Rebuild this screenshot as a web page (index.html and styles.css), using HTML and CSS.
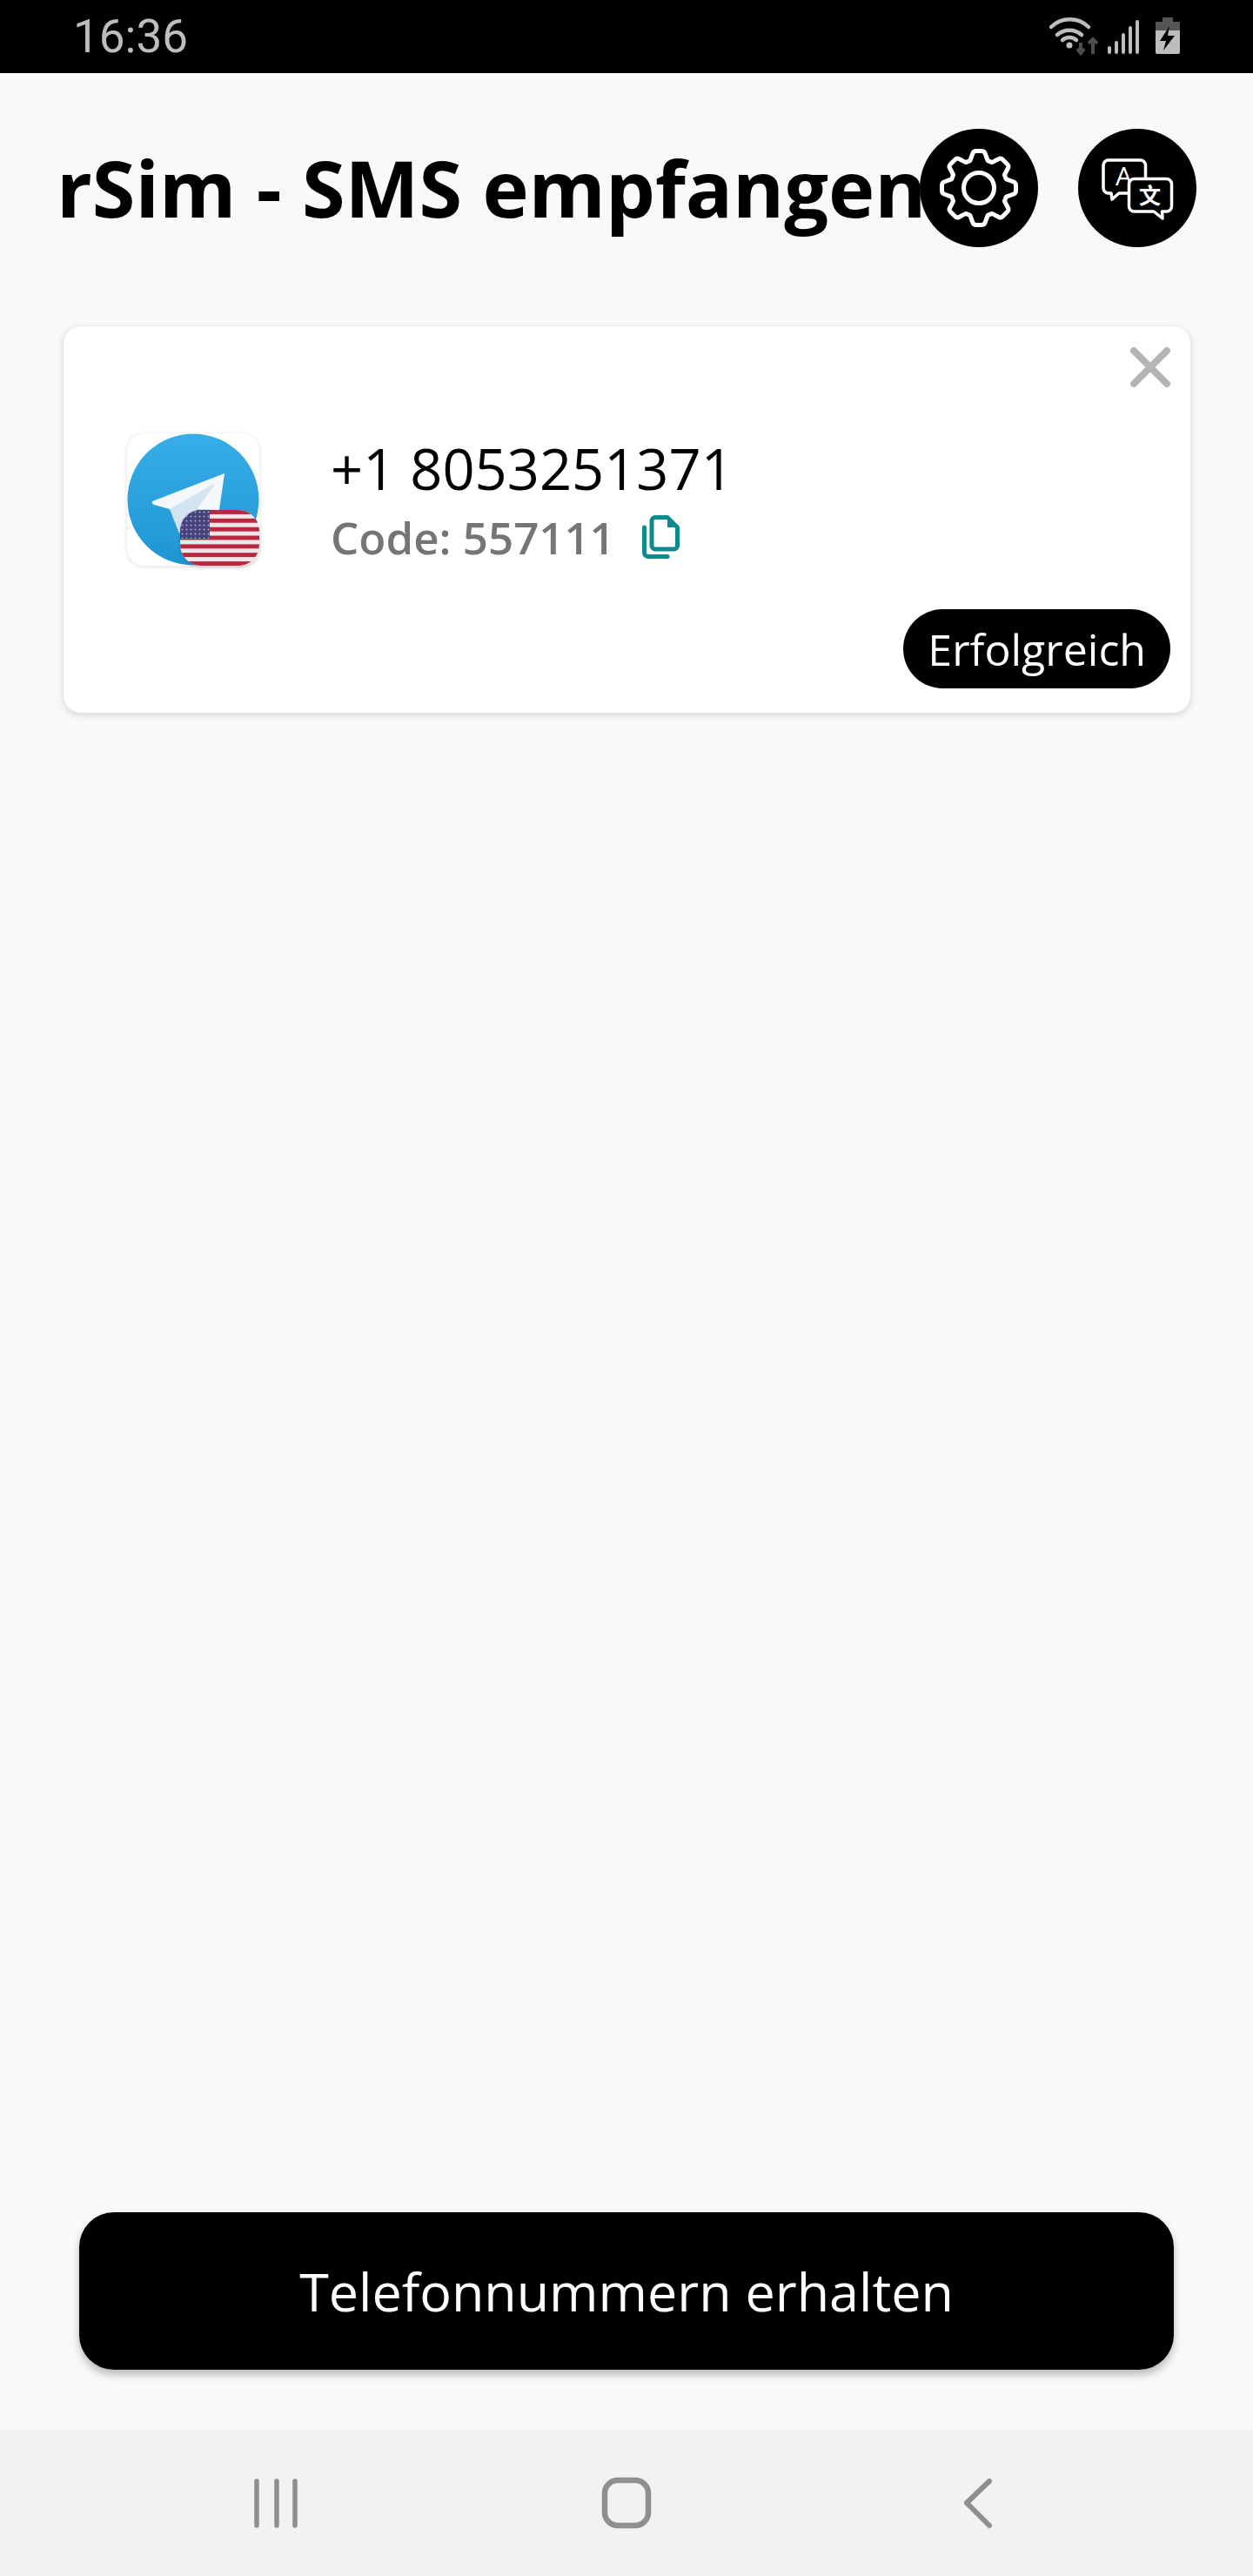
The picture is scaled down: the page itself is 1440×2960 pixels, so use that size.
FILE: index.html
```html
<!DOCTYPE html>
<html>

<head>
    <title>rSim - SMS empfangen</title>
    <link rel="stylesheet" href="styles.css">
</head>

<body>
    <!-- Status bar -->
    <div class="status-bar">
        <span class="status-time">16:36</span>
        <svg class="status-icons" width="200" height="85" viewBox="0 0 200 85">
            <g fill="none" stroke="#bdbdbd" stroke-width="4.5" stroke-linecap="round">
                <path d="M28 31 A31 31 0 0 1 71 31" />
                <path d="M35 40 A21 21 0 0 1 63 40" />
                <path d="M41 46 A12 12 0 0 1 57 46" />
            </g>
            <circle cx="49" cy="52" r="3.5" fill="#bdbdbd" />
            <path d="M62 49V60M58 56l4 5 4-5M76 62V46M71 50l5-5 5 5" fill="none" stroke="#4d4d4d" stroke-width="4" />
            <g fill="none" stroke="#bdbdbd" stroke-width="4" stroke-linecap="round">
                <path d="M95 55V60M103 49V60M111 40V60M119 32V60M127 25V60" />
            </g>
            <path d="M156 20H168V25H176V35H148V25H156Z" fill="#555" />
            <path d="M148 35H176V60a2 2 0 0 1-2 2H150a2 2 0 0 1-2-2Z" fill="#bdbdbd" />
            <path d="M164 30L153 47H160L157 58L170 41H162Z" fill="#000" />
        </svg>
    </div>

    <div class="main">
        <div class="header">
            <h1 class="title">rSim - SMS empfangen</h1>
            <div class="header-buttons">
                <button class="round-btn">
                    <svg width="100" height="100" viewBox="-50 -50 100 100" fill="none" stroke="#fff" stroke-width="5" stroke-linejoin="round">
                        <path d="M-10.2 -31.4L-7 -40Q-6 -42.500 -3 -42.500H3Q6 -42.500 7 -40L10.200 -31.400Q12.500 -30.500 15 -29.400L23 -33.500Q25.300 -34.800 27.500 -32.500L32.500 -27.500Q34.800 -25.300 33.500 -23L29.400 -15Q30.500 -12.500 31.400 -10.200L40 -7Q42.500 -6 42.500 -3V3Q42.500 6 40 7L31.400 10.200Q30.500 12.500 29.400 15L33.500 23Q34.800 25.300 32.500 27.500L27.500 32.500Q25.300 34.800 23 33.500L15 29.400Q12.500 30.500 10.200 31.400L7 40Q6 42.500 3 42.500H-3Q-6 42.500 -7 40L-10.200 31.400Q-12.500 30.500 -15 29.400L-23 33.500Q-25.300 34.800 -27.500 32.500L-32.500 27.500Q-34.800 25.300 -33.500 23L-29.400 15Q-30.500 12.500 -31.400 10.200L-40 7Q-42.500 6 -42.500 3V-3Q-42.500 -6 -40 -7L-31.400 -10.200Q-30.500 -12.500 -29.400 -15L-33.500 -23Q-34.800 -25.300 -32.500 -27.500L-27.500 -32.500Q-25.300 -34.800 -23 -33.500L-15 -29.400Q-12.500 -30.500 -10.200 -31.400Z" />
                        <circle r="17.5" />
                    </svg>
                </button>
                <button class="round-btn">
                    <svg width="100" height="100" viewBox="-50 -50 100 100" fill="none" stroke="#fff" stroke-width="3.5" stroke-linejoin="round" stroke-linecap="round">
                        <path d="M9.5 -12V-26a6 6 0 0 0-6-6H-33a6 6 0 0 0-6 6V0a6 6 0 0 0 6 6H-30L-29 13L-21 6H-10" />
                        <text class="icon-letter" x="-15.5" y="-3" text-anchor="middle">A</text>
                        <path d="M-3.5 -10.5H33.5a6 6 0 0 1 6 6V21a6 6 0 0 1-6 6H28.5L29 35L19 27H-3.5a6 6 0 0 1-6-6V-4.5a6 6 0 0 1 6-6Z" fill="#000" />
                        <text class="icon-han" x="14.5" y="18" text-anchor="middle">文</text>
                    </svg>
                </button>
            </div>
        </div>

        <div class="card">
            <svg class="card-close" width="46" height="46" viewBox="0 0 46 46">
                <path d="M4 4L42 42M42 4L4 42" stroke="#b5b5b5" stroke-width="8" stroke-linecap="round" />
            </svg>

            <div class="card-row">
                <div class="app-icon">
                    <svg width="152" height="152" viewBox="0 0 152 152">
                        <defs>
                            <linearGradient id="tgBlue" x1="0" y1="0" x2="0" y2="1">
                                <stop offset="0" stop-color="#37aeE8" />
                                <stop offset="1" stop-color="#1f96d2" />
                            </linearGradient>
                        </defs>
                        <circle cx="76" cy="76" r="75.5" fill="url(#tgBlue)" />
                        <path d="M112 46L29 78Q28 81 31 82L49 87L106 88Z" fill="#f4f8fb" />
                        <path d="M49 87L60 115L100 60Q102 58 98 59Z" fill="#d3e4f0" />
                    </svg>
                    <svg class="flag" width="91" height="64" viewBox="0 0 91 64">
                        <defs>
                            <pattern id="stars" width="5" height="5" patternUnits="userSpaceOnUse">
                                <circle cx="2.5" cy="2.5" r="1" fill="#a9a9c8" />
                            </pattern>
                        </defs>
                        <rect width="91" height="64" fill="#f3e6e8" />
                        <g fill="#b8293f">
                            <rect y="0" width="91" height="4.9" />
                            <rect y="9.8" width="91" height="4.9" />
                            <rect y="19.7" width="91" height="4.9" />
                            <rect y="29.5" width="91" height="4.9" />
                            <rect y="39.4" width="91" height="4.9" />
                            <rect y="49.2" width="91" height="4.9" />
                            <rect y="59.1" width="91" height="4.9" />
                        </g>
                        <rect width="34" height="33" fill="#45437c" />
                        <rect width="34" height="33" fill="url(#stars)" />
                    </svg>
                </div>
                <div class="card-text">
                    <div class="phone">+1 8053251371</div>
                    <div class="code-row">
                        <span class="code">Code: 557111</span>
                        <svg class="copy-icon" width="43" height="50" viewBox="0 0 43 50" fill="none" stroke="#0f8a8c" stroke-width="5" stroke-linejoin="round" stroke-linecap="round">
                            <path d="M2.5 14V43a4.500 4.500 0 0 0 4.500 4.500H29" />
                            <path d="M15 2.500H29L40.500 14V35a4 4 0 0 1-4 4H15a4 4 0 0 1-4-4V6.500a4 4 0 0 1 4-4Z" />
                            <path d="M29 4V14H39" fill="#0f8a8c" stroke-width="0" />
                        </svg>
                    </div>
                </div>
            </div>

            <div class="card-status">
                <span class="pill">Erfolgreich</span>
            </div>
        </div>

        <div class="bottom-action">
            <button class="primary-btn">Telefonnummern erhalten</button>
        </div>
    </div>

    <!-- Android navigation -->
    <div class="nav-bar">
        <div class="nav-cell">
            <svg width="60" height="60" viewBox="0 0 60 60" fill="none" stroke="#8f8f8f" stroke-width="5.5" stroke-linecap="round">
                <path d="M7 5V56M30 5V56M51 5V56" />
            </svg>
        </div>
        <div class="nav-cell">
            <svg width="60" height="60" viewBox="0 0 60 60" fill="none" stroke="#8f8f8f" stroke-width="6.5">
                <rect x="5" y="4" width="50" height="52" rx="15" />
            </svg>
        </div>
        <div class="nav-cell">
            <svg width="60" height="60" viewBox="0 0 60 60" fill="none" stroke="#8f8f8f" stroke-width="6" stroke-linecap="round" stroke-linejoin="round">
                <path d="M45 5L19 30L45 56" />
            </svg>
        </div>
    </div>
</body>

</html>
```

FILE: styles.css
```css
/* rSim - SMS screen */
* {
    box-sizing: border-box;
}

body {
    margin: 0;
    height: 2960px;
    display: flex;
    flex-direction: column;
    font-family: "Open Sans", sans-serif;
    background-color: #f8f9fb;
    overflow: hidden;
}

button {
    border: none;
    padding: 0;
    font-family: inherit;
}

/* Status bar */
.status-bar {
    height: 84px;
    flex-shrink: 0;
    background-color: #000;
    display: flex;
    align-items: center;
    justify-content: space-between;
    padding: 0 60px 0 84px;
}

.status-time {
    font-family: Roboto, sans-serif;
    font-size: 53px;
    color: #bdbdbd;
    line-height: 84px;
}

.status-icons {
    display: block;
}

/* Main area */
.main {
    flex: 1;
    display: flex;
    flex-direction: column;
}

.header {
    display: flex;
    align-items: flex-start;
    padding: 64px 65px 0 65px;
    height: 291px;
}

/* the title runs right up under the first round button */
.title {
    flex: 1;
    min-width: 0;
    margin: 0;
    font-size: 90px;
    font-weight: 700;
    line-height: 134px;
    color: #000;
    white-space: nowrap;
}

.header-buttons {
    display: flex;
    flex-shrink: 0;
    gap: 46px;
}

.round-btn {
    width: 136px;
    height: 136px;
    border-radius: 50%;
    background-color: #000;
    display: flex;
    align-items: center;
    justify-content: center;
}

/* Card */
.card {
    position: relative;
    margin: 0 72px 0 73px;
    height: 444px;
    padding: 123px 23px 28px 73px;
    background-color: #fff;
    border-radius: 20px;
    box-shadow: 0 2px 8px rgba(0, 0, 0, 0.16);
}

.card-close {
    position: absolute;
    top: 24px;
    right: 23px;
}

.card-row {
    display: flex;
    gap: 82px;
}

.app-icon {
    position: relative;
    width: 152px;
    height: 152px;
    background-color: #fff;
    border-radius: 20px;
    box-shadow: 0 1px 5px rgba(0, 0, 0, 0.14);
}

.app-icon svg {
    display: block;
}

.flag {
    position: absolute;
    right: 0;
    bottom: 0;
    border-radius: 24px;
    box-shadow: 0 2px 4px rgba(0, 0, 0, 0.15);
    filter: blur(0.6px);
}

.phone {
    font-size: 65px;
    line-height: 80px;
    color: #000;
}

.code-row {
    display: flex;
    align-items: center;
    gap: 31px;
    height: 78px;
}

.code {
    font-size: 51px;
    font-weight: 600;
    color: #757575;
}

.copy-icon {
    display: block;
}

.icon-letter {
    font-family: "Open Sans", sans-serif;
    font-size: 30px;
    fill: #fff;
    stroke: none;
}

.icon-han {
    font-family: "Noto Sans CJK SC", sans-serif;
    font-size: 25px;
    font-weight: 700;
    fill: #fff;
    stroke: none;
}

.card-status {
    display: flex;
    justify-content: flex-end;
    margin-top: 44px;
}

.pill {
    height: 91px;
    padding: 0 28px;
    display: flex;
    align-items: center;
    background-color: #000;
    color: #fff;
    font-size: 50px;
    border-radius: 46px;
}

/* Bottom button */
.bottom-action {
    margin-top: auto;
    padding: 0 91px 69px 91px;
}

.primary-btn {
    display: block;
    width: 100%;
    height: 181px;
    background-color: #000;
    color: #fff;
    font-size: 61px;
    border-radius: 40px;
    box-shadow: 0 6px 10px rgba(0, 0, 0, 0.25);
}

/* Navigation bar */
.nav-bar {
    height: 168px;
    flex-shrink: 0;
    background-color: #f2f2f2;
    display: flex;
    justify-content: center;
    align-items: center;
}

.nav-cell {
    width: 402px;
    display: flex;
    justify-content: center;
}
```
